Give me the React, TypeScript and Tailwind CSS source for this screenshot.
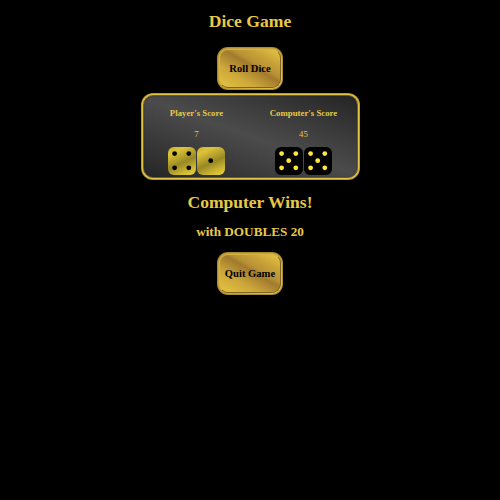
const PIPS: Record<number, number[]> = {
  1: [4],
  4: [0, 2, 6, 8],
  5: [0, 2, 4, 6, 8],
};

const STEPS = [6.6, 13.7, 20.8];

function Die({ value, dark }: { value: number; dark?: boolean }) {
  const face = dark
    ? "bg-black"
    : "bg-[linear-gradient(155deg,#ccb42e_0%,#dbc238_20%,#988824_55%,#cdb733_80%,#ead43e_100%)]";
  return (
    <div className={`h-[28px] w-[28px] rounded-[6px] ${face}`}>
      <svg viewBox="0 0 28 28" className="block size-full">
        {PIPS[value].map((i) => (
          <circle key={i} cx={STEPS[i % 3]} cy={STEPS[Math.floor(i / 3)]} r={2.4} fill={dark ? "#ffe838" : "#000"} />
        ))}
      </svg>
    </div>
  );
}

function GoldButton({ label }: { label: string }) {
  return (
    <button className="flex h-[43px] w-[66px] rounded-[11px] bg-[#a98c32] p-px">
      <span className="flex flex-1 rounded-[10px] bg-[linear-gradient(135deg,#c4a03a_0%,#c7a33c_50%,#e8c848_100%)] p-px">
        <span className="flex flex-1 items-center justify-center whitespace-nowrap rounded-[9px] border border-t-[#d5b341] border-l-[#d5b341] border-r-[#7d6425] border-b-[#7d6425] bg-[linear-gradient(30deg,#e5c442_0%,#cda73a_30%,#a17a2e_55%,#b99134_62%,#c9a339_78%,#e6c645_100%)] pt-[2px] text-[10.6px] font-bold leading-none text-black">
          {label}
        </span>
      </span>
    </button>
  );
}

function Score({ name, score, dice, dark }: { name: string; score: number; dice: number[]; dark?: boolean }) {
  return (
    <div className="flex w-[107px] shrink-0 flex-col items-center">
      <h3 className="mt-[11.5px] h-[10px] whitespace-nowrap text-[8.8px] font-bold leading-[10px]">{name}</h3>
      <p className="mt-[11px] h-[10px] text-[8.8px] leading-[10px]">{score}</p>
      <div className="mt-[8.5px] flex gap-[1.5px]">
        {dice.map((value, i) => (
          <Die key={i} value={value} dark={dark} />
        ))}
      </div>
    </div>
  );
}

export default function App() {
  return (
    <main className="flex h-[500px] w-[500px] flex-col items-center overflow-hidden bg-black font-['Liberation_Serif',serif] text-[#e8c947]">
      <h1 className="mt-[11px] h-5 text-[17.6px] font-bold leading-5">Dice Game</h1>
      <div className="mt-4 flex">
        <GoldButton label="Roll Dice" />
      </div>
      <section className="mt-[3px] flex h-[87px] w-[219px] rounded-[12px] bg-[#b89936] p-px">
        <div className="flex min-w-0 flex-1 rounded-[11px] bg-[#e3c344] p-px">
          <div className="flex min-w-0 flex-1 justify-center rounded-[10px] border border-[#6b5b30] bg-[linear-gradient(20deg,#252525_0%,#353535_20%,#4b4b4b_50%,#3b3b3b_72%,#242424_100%)] shadow-[inset_0_0_1px_0px_#1d2030]">
            <Score name="Player's Score" score={7} dice={[4, 1]} />
            <Score name="Computer's Score" score={45} dice={[5, 5]} dark />
          </div>
        </div>
      </section>
      <h2 className="mt-3 h-5 text-[17.5px] font-bold leading-5">Computer Wins!</h2>
      <h3 className="mt-[12px] h-4 text-[13.2px] font-bold leading-4">with DOUBLES 20</h3>
      <div className="mt-[12px] flex">
        <GoldButton label="Quit Game" />
      </div>
    </main>
  );
}
